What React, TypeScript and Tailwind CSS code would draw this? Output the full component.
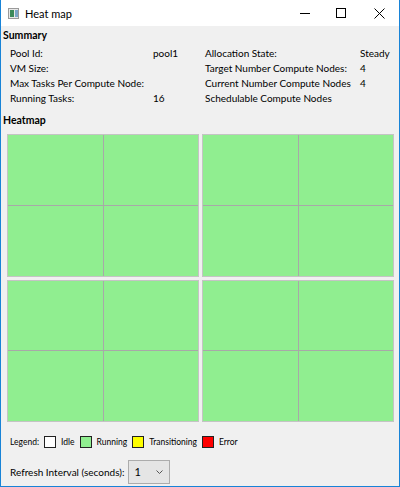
import * as React from "react";

const font = { fontFamily: 'Lato, "Open Sans", sans-serif' };

const rows: [string, string, string, string][] = [
  ["Pool Id:", "pool1", "Allocation State:", "Steady"],
  ["VM Size:", "", "Target Number Compute Nodes:", "4"],
  ["Max Tasks Per Compute Node:", "", "Current Number Compute Nodes", "4"],
  ["Running Tasks:", "16", "Schedulable Compute Nodes", ""],
];

const legend = [
  { label: "Idle", color: "bg-white" },
  { label: "Running", color: "bg-[#90ee90]" },
  { label: "Transitioning", color: "bg-[#ffff00]" },
  { label: "Error", color: "bg-[#ff0000]" },
];

function NodeBlock() {
  return (
    <div className="grid grid-cols-2 grid-rows-2 gap-px border border-[#c4c4c4] bg-[#a8a8a8]">
      <div className="bg-[#90ee90]" />
      <div className="bg-[#90ee90]" />
      <div className="bg-[#90ee90]" />
      <div className="bg-[#90ee90]" />
    </div>
  );
}

export default function App() {
  return (
    <div
      className="flex h-[487px] w-[400px] flex-col border-x border-b border-[#1883d7] bg-[#f0f0f0] text-[10px] text-black"
      style={font}
    >
      {/* title bar */}
      <div className="flex h-[26px] shrink-0 items-center bg-white">
        <div className="ml-[7px] flex h-[11px] w-[11px] border border-[#9a9a9a] bg-[#e8e8e8]">
          <div className="m-px w-[4px] bg-[#3c8a5a]" />
          <div className="my-px w-[3px] bg-[#7aa6c8]" />
        </div>
        <span className="ml-[6px] text-[11px] leading-none">Heat map</span>
        <div className="ml-auto flex h-full items-center">
          <div className="flex h-full w-[36px] items-center justify-center">
            <div className="h-px w-[10px] bg-black" />
          </div>
          <div className="flex h-full w-[36px] items-center justify-center">
            <div className="h-[10px] w-[10px] border border-black" />
          </div>
          <div className="flex h-full w-[40px] items-center justify-center">
            <svg width="11" height="11" viewBox="0 0 11 11">
              <path d="M0.5 0.5 L10.5 10.5 M10.5 0.5 L0.5 10.5" stroke="black" strokeWidth="1" />
            </svg>
          </div>
        </div>
      </div>

      {/* body */}
      <div className="flex min-h-0 flex-1 flex-col px-[5px]">
        <div className="-ml-[3px] mt-[1px] text-[10.5px] font-bold leading-[16px]">Summary</div>
        <div className="mt-[3px] grid grid-cols-[143px_52px_155px_1fr] pl-[4px] leading-[15px]">
          {rows.map((r, i) => (
            <React.Fragment key={i}>
              <span className="whitespace-nowrap">{r[0]}</span>
              <span>{r[1]}</span>
              <span className="whitespace-nowrap">{r[2]}</span>
              <span>{r[3]}</span>
            </React.Fragment>
          ))}
        </div>
        <div className="-ml-[3px] mt-[6px] text-[10.5px] font-bold leading-[16px]">Heatmap</div>
        <div className="mt-[6px] grid h-[288px] grid-cols-2 grid-rows-2 gap-[3px] pl-px">
          <NodeBlock />
          <NodeBlock />
          <NodeBlock />
          <NodeBlock />
        </div>

        <div className="mt-[14px] flex items-center pl-[4px] text-[8.5px] leading-none">
          <span>Legend:</span>
          {legend.map((l) => (
            <div key={l.label} className="ml-[5px] flex items-center">
              <div className={`h-[12px] w-[12px] border border-[#222] ${l.color}`} />
              <span className="ml-[5px]">{l.label}</span>
            </div>
          ))}
        </div>

        <div className="mt-[12px] flex items-center pl-[4px]">
          <span className="whitespace-nowrap">Refresh Interval (seconds):</span>
          <div className="ml-[4px] flex h-[24px] w-[42px] items-center border border-[#acacac] bg-[#e5e5e5] pl-[5px] pr-[6px]">
            <span className="text-[11px]">1</span>
            <svg className="ml-auto" width="7" height="4" viewBox="0 0 7 4">
              <path d="M0.5 0.5 L3.5 3.5 L6.5 0.5" stroke="#555" fill="none" strokeWidth="1" />
            </svg>
          </div>
        </div>
      </div>
    </div>
  );
}
